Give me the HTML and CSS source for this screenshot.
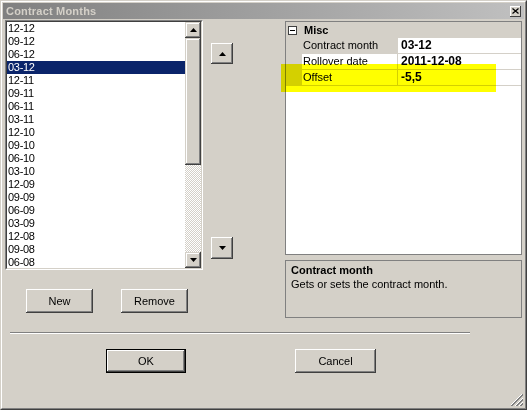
FILE: index.html
```html
<!DOCTYPE html>
<html>
<head>
<meta charset="utf-8">
<link rel="stylesheet" href="styles.css">
</head>
<body>
<div class="window">
  <div class="frame">
    <div class="titlebar">
      <span class="title">Contract Months</span>
      <span class="close"><svg width="7" height="6" viewBox="0 0 7 6"><path d="M0.5 0.5L6.5 5.5M6.5 0.5L0.5 5.5" stroke="#000" stroke-width="1.2" fill="none"/></svg></span>
    </div>
    <div class="content">
      <div class="top">
        <div class="left">
          <div class="listbox">
            <div class="listbox-in">
              <ul class="items">
                <li>12-12</li><li>09-12</li><li>06-12</li><li class="sel">03-12</li>
                <li>12-11</li><li>09-11</li><li>06-11</li><li>03-11</li>
                <li>12-10</li><li>09-10</li><li>06-10</li><li>03-10</li>
                <li>12-09</li><li>09-09</li><li>06-09</li><li>03-09</li>
                <li>12-08</li><li>09-08</li><li>06-08</li>
              </ul>
              <div class="vscroll">
                <div class="sb-btn"><svg width="7" height="4" viewBox="0 0 7 4"><polygon points="3.5,0 7,4 0,4" fill="#000"/></svg></div>
                <div class="thumb"></div>
                <div class="track"></div>
                <div class="sb-btn"><svg width="7" height="4" viewBox="0 0 7 4"><polygon points="0,0 7,0 3.5,4" fill="#000"/></svg></div>
              </div>
            </div>
          </div>
          <div class="btnrow">
            <button class="btn">New</button>
            <button class="btn">Remove</button>
          </div>
        </div>
        <div class="arrows">
          <button class="btn sq up"><svg width="7" height="4" viewBox="0 0 7 4"><polygon points="3.5,0 7,4 0,4" fill="#000"/></svg></button>
          <button class="btn sq down"><svg width="7" height="4" viewBox="0 0 7 4"><polygon points="0,0 7,0 3.5,4" fill="#000"/></svg></button>
        </div>
        <div class="right">
          <div class="grid">
            <div class="prow cat">
              <span class="gut"><span class="expander"></span></span>
              <span class="catname">Misc</span>
            </div>
            <div class="prow">
              <span class="gut"></span>
              <span class="pname selname">Contract month</span>
              <span class="pval">03-12</span>
            </div>
            <div class="prow">
              <span class="gut"></span>
              <span class="pname">Rollover date</span>
              <span class="pval">2011-12-08</span>
            </div>
            <div class="prow">
              <span class="gut"></span>
              <span class="pname">Offset</span>
              <span class="pval">-5,5</span>
            </div>
          </div>
          <div class="desc">
            <b>Contract month</b>
            <span>Gets or sets the contract month.</span>
          </div>
        </div>
      </div>
      <div class="sep"></div>
      <div class="okrow">
        <button class="btn ok">OK</button>
        <button class="btn cancel">Cancel</button>
      </div>
    </div>
  </div>
  <div class="marker"></div>
  <svg class="grip" width="12" height="12" viewBox="0 0 12 12" shape-rendering="crispEdges">
    <path d="M11 0L0 11" stroke="#fff"/>
    <path d="M12 0L0 12M12 1L1 12" stroke="#808080"/>
    <path d="M12 4L4 12" stroke="#fff"/>
    <path d="M12 5L5 12M12 6L6 12" stroke="#808080"/>
    <path d="M12 8L8 12" stroke="#fff"/>
    <path d="M12 9L9 12M12 10L10 12" stroke="#808080"/>
  </svg>
</div>
</body>
</html>
```
FILE: styles.css
```css
* { box-sizing: border-box; }
html, body { margin: 0; padding: 0; }
body {
  width: 527px;
  height: 410px;
  overflow: hidden;
  background: #d4d0c8;
  font-family: "Liberation Sans", Arial, sans-serif;
  font-size: 11px;
  color: #000;
}
.window {
  position: relative;
  width: 527px;
  height: 410px;
  border: 1px solid;
  border-color: #d4d0c8 #404040 #404040 #d4d0c8;
  background: #d4d0c8;
}
.frame {
  height: 100%;
  border: 1px solid;
  border-color: #fff #808080 #808080 #fff;
  padding: 1px;
  display: flex;
  flex-direction: column;
}
.titlebar {
  height: 16px;
  flex: none;
  background: linear-gradient(to right, #808080, #c0c0c0);
  display: flex;
  align-items: center;
  justify-content: space-between;
  padding: 0 3px 0 3px;
}
.title {
  color: #d4d0c8;
  font-weight: bold;
  font-size: 11px;
  letter-spacing: 0.2px;
}
.close {
  width: 11px;
  height: 11px;
  background: #d4d0c8;
  box-shadow: inset -1px -1px #404040, inset 1px 1px #fff;
  display: flex;
  align-items: center;
  justify-content: center;
}
.content {
  flex: 1;
  display: flex;
  flex-direction: column;
}
.top {
  display: flex;
  align-items: flex-start;
}
.left {
  margin-left: 2px;
  margin-top: 1px;
  width: 198px;
}
.listbox {
  height: 250px;
  border: 1px solid;
  border-color: #808080 #fff #fff #808080;
}
.listbox-in {
  height: 100%;
  border: 1px solid;
  border-color: #404040 #d4d0c8 #d4d0c8 #404040;
  background: #fff;
  display: flex;
}
.items {
  flex: 1;
  list-style: none;
  margin: 0;
  padding: 0;
  overflow: hidden;
}
.items li {
  height: 13px;
  line-height: 13px;
  padding-left: 1px;
  letter-spacing: -0.3px;
}
.items li.sel {
  background: #0a246a;
  color: #fff;
}
.vscroll {
  width: 16px;
  display: flex;
  flex-direction: column;
}
.sb-btn, .thumb {
  background: #d4d0c8;
  box-shadow: inset -1px -1px #404040, inset 1px 1px #d4d0c8, inset -2px -2px #808080, inset 2px 2px #fff;
}
.sb-btn {
  height: 16px;
  display: flex;
  align-items: center;
  justify-content: center;
}
.sb-btn svg { display: block; }
.thumb { height: 127px; }
.track {
  flex: 1;
  background: repeating-conic-gradient(#d4d0c8 0 25%, #fff 0 50%) 0 0 / 2px 2px;
}
.btnrow {
  display: flex;
  gap: 28px;
  margin-top: 19px;
  margin-left: 21px;
}
.btn {
  width: 67px;
  height: 24px;
  padding: 0;
  border: none;
  background: #d4d0c8;
  font-family: "Liberation Sans", Arial, sans-serif;
  font-size: 11px;
  color: #000;
  box-shadow: inset -1px -1px #404040, inset 1px 1px #fff, inset -2px -2px #808080, inset 2px 2px #d4d0c8;
  display: flex;
  align-items: center;
  justify-content: center;
}
.arrows {
  margin-left: 8px;
  display: flex;
  flex-direction: column;
}
.btn.sq { width: 22px; height: 21px; }
.btn.sq.up { margin-top: 24px; }
.btn.sq.down { margin-top: 173px; height: 22px; }
.right {
  margin-left: 52px;
  margin-top: 2px;
  width: 237px;
}
.grid {
  height: 234px;
  border: 1px solid #808080;
  background: #fff;
}
.prow {
  height: 16px;
  display: flex;
}
.gut {
  width: 16px;
  flex: none;
  background: #d4d0c8;
}
.cat { background: #d4d0c8; }
.cat .gut {
  display: flex;
  align-items: center;
  padding-left: 2px;
}
.expander {
  position: relative;
  width: 9px;
  height: 9px;
  border: 1px solid #404040;
  background: #fff;
}
.expander::after {
  content: "";
  position: absolute;
  left: 1px;
  top: 3px;
  width: 5px;
  height: 1px;
  background: #000;
}
.catname {
  font-weight: bold;
  line-height: 16px;
  padding-left: 2px;
}
.pname {
  width: 96px;
  flex: none;
  padding-left: 1px;
  line-height: 15px;
  border-right: 1px solid #d4d0c8;
  border-bottom: 1px solid #d4d0c8;
  color: #000;
}
.pname.selname { background: #d4d0c8; }
.pval {
  flex: 1;
  padding-left: 3px;
  line-height: 15px;
  font-weight: bold;
  font-size: 12px;
  border-bottom: 1px solid #d4d0c8;
}
.desc {
  margin-top: 5px;
  height: 58px;
  border: 1px solid #808080;
  padding: 2px 5px;
  line-height: 14px;
  display: flex;
  flex-direction: column;
}
.sep {
  margin: 14px 0 0 7px;
  width: 460px;
  height: 2px;
  border-top: 1px solid #808080;
  border-bottom: 1px solid #fff;
}
.okrow {
  display: flex;
  margin-top: 15px;
  padding-left: 103px;
  gap: 109px;
}
.btn.ok {
  width: 80px;
  box-shadow: inset 0 0 0 1px #000, inset -2px -2px #404040, inset 2px 2px #fff, inset -3px -3px #808080;
}
.btn.cancel { width: 81px; }
.marker {
  position: absolute;
  left: 280px;
  top: 63px;
  width: 215px;
  height: 28px;
  background: #ffff00;
  mix-blend-mode: multiply;
}
.grip {
  position: absolute;
  right: 3px;
  bottom: 3px;
}
```
